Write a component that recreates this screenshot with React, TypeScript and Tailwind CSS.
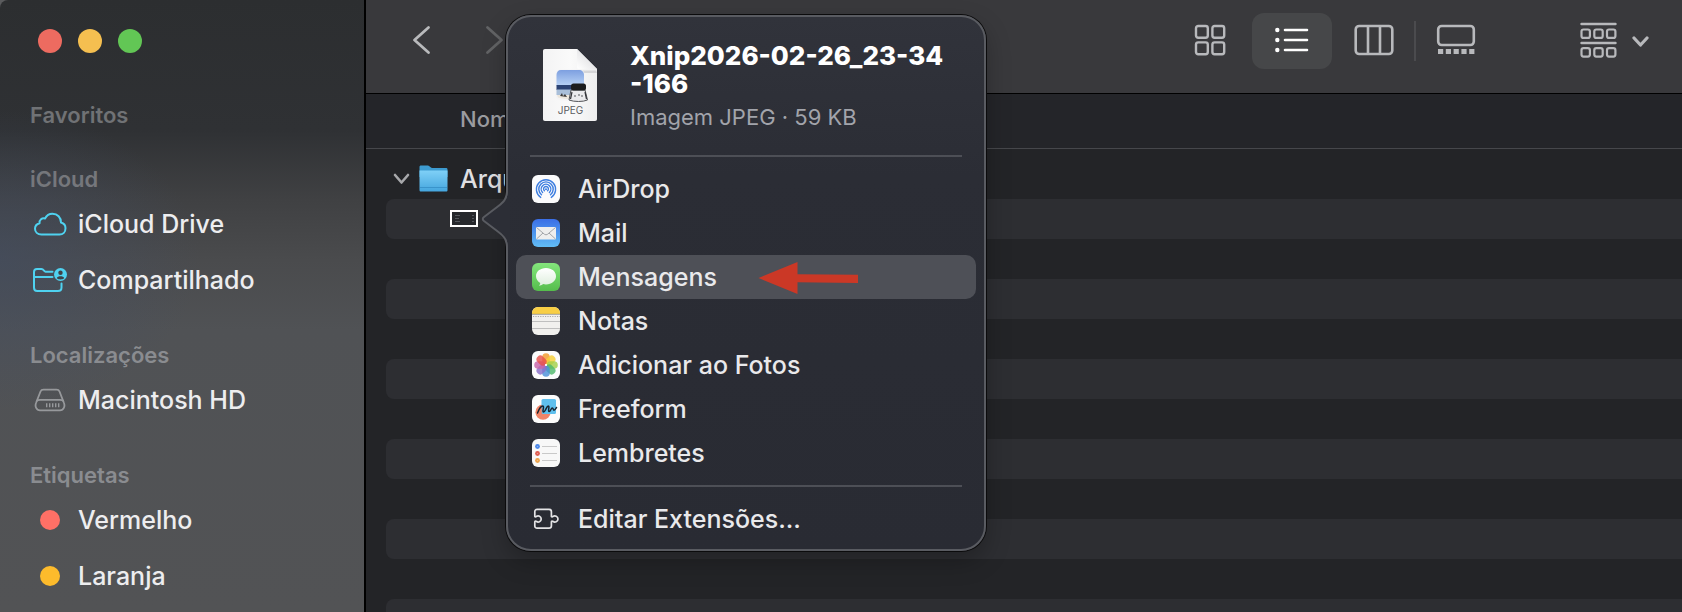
import type { ReactNode } from "react";

const petals = [
  "#f39a2b", "#f7d038", "#a3cf4a", "#4fb86b", "#4a90d9", "#8a6fc9", "#c863a8", "#e8504a",
];

function CloudIcon() {
  return (
    <svg width="34" height="24" viewBox="0 0 34 24" fill="none" stroke="#4fd2f0" strokeWidth="2" strokeLinejoin="round">
      <path d="M8.500 22.500C4.500 22.500 2 20 2 16.800C2 13.900 4 12 6.500 11.300C6.200 8 9 5.600 12 6.500C13.500 3.500 16.500 1.700 19.500 1.700C24.500 1.700 28 5.500 28 10.500C30.800 11.200 32.500 13.500 32.500 16.300C32.500 19.800 30 22.500 26.500 22.500Z" />
    </svg>
  );
}

function SharedFolderIcon() {
  return (
    <svg width="36" height="26" viewBox="0 0 36 26" fill="none" stroke="#4fd2f0" strokeWidth="2" strokeLinejoin="round" strokeLinecap="round">
      <path d="M20.500 4.800H13.500C12.300 4.800 11.500 2 9.500 2H5C2.800 2 2 3.200 2 5V20.500C2 22.800 3 24 5.200 24H26C28.300 24 29.500 22.800 29.500 20.500V16.500" />
      <path d="M2 10H20.500" />
      <circle cx="28.500" cy="7.500" r="6.500" fill="#4fd2f0" stroke="none" />
      <circle cx="28.500" cy="5.700" r="2.200" fill="#404247" stroke="none" />
      <path d="M24.800 11.200C25.400 8.600 31.600 8.600 32.200 11.200C30.500 12.800 26.500 12.800 24.800 11.200Z" fill="#404247" stroke="none" />
    </svg>
  );
}

function DriveIcon() {
  return (
    <svg width="32" height="24" viewBox="0 0 32 24" fill="none" stroke="#97999c" strokeWidth="1.800" strokeLinejoin="round">
      <path d="M6.500 3.500C7 2.200 8 1.600 9.500 1.600H22.500C24 1.600 25 2.200 25.500 3.500L29.800 14.500C31.500 18.500 29.500 22.300 26 22.300H6C2.500 22.300 0.500 18.500 2.200 14.500Z" />
      <path d="M2.500 13C4 11.800 5 11.900 6.500 11.900H25.500C27 11.900 28 11.800 29.500 13" />
      <path d="M12.700 15.200V19.200M15.700 15.200V19.200M18.700 15.200V19.200M21.700 15.200V19.200M24.700 15.200V19.200" strokeWidth="1.400" />
    </svg>
  );
}

function Tag({ color }: { color: string }) {
  return (
    <svg width="20" height="20" viewBox="0 0 20 20">
      <circle cx="10" cy="10" r="10" fill={color} />
    </svg>
  );
}

function SidebarItem({ icon, label }: { icon: ReactNode; label: string }) {
  return (
    <li>
      <a href="#" className="flex h-[56px] items-center pl-[32px] text-[25px] font-medium text-[#ededef]">
        <span className="flex w-[36px] shrink-0 justify-center">{icon}</span>
        <span className="ml-[10px] pt-[2px]">{label}</span>
      </a>
    </li>
  );
}

function SidebarGroup({ title, color, children }: { title: string; color: string; children?: ReactNode }) {
  return (
    <section className="mb-[30px]">
      <h2 className={`flex h-[34px] items-center pl-[30px] text-[22px] font-semibold ${color}`}>{title}</h2>
      {children && <ul>{children}</ul>}
    </section>
  );
}

function Sidebar() {
  return (
    <aside className="w-[366px] shrink-0 overflow-hidden rounded-tl-[8px] border-r-2 border-black bg-[radial-gradient(ellipse_200px_150px_at_0px_260px,#424d6299,transparent),linear-gradient(#2c2e30_0px,#2f3134_130px,#404143_200px,#4a4b4d_260px,#505255_330px,#525355_612px)]">
      <div className="flex h-[98px] gap-[16px] pt-[29px] pl-[38px]">
        <button aria-label="Fechar" className="size-[24px] rounded-full bg-[#ed6b60]" />
        <button aria-label="Minimizar" className="size-[24px] rounded-full bg-[#f5bf50]" />
        <button aria-label="Ampliar" className="size-[24px] rounded-full bg-[#62c655]" />
      </div>
      <nav>
        <SidebarGroup title="Favoritos" color="text-[#707275]" />
        <SidebarGroup title="iCloud" color="text-[#75777c]">
          <SidebarItem icon={<CloudIcon />} label="iCloud Drive" />
          <SidebarItem icon={<SharedFolderIcon />} label="Compartilhado" />
        </SidebarGroup>
        <SidebarGroup title="Localizações" color="text-[#8a8c90]">
          <SidebarItem icon={<DriveIcon />} label="Macintosh HD" />
        </SidebarGroup>
        <SidebarGroup title="Etiquetas" color="text-[#8a8c90]">
          <SidebarItem icon={<Tag color="#ff7066" />} label="Vermelho" />
          <SidebarItem icon={<Tag color="#fdbb2c" />} label="Laranja" />
        </SidebarGroup>
      </nav>
    </aside>
  );
}

function ViewButton({ label, active, children }: { label: string; active?: boolean; children: ReactNode }) {
  return (
    <button
      aria-label={label}
      className={`flex h-[56px] w-[80px] items-center justify-center rounded-[12px] ${active ? "bg-[#464749] text-white" : "text-[#b8b9bc]"}`}
    >
      {children}
    </button>
  );
}

function Toolbar() {
  return (
    <header className="flex h-[94px] items-start border-b border-black bg-[#39393c] pt-[13px] pr-[33px] pl-[46px]">
      <div className="flex h-[54px] items-center gap-[54px]">
        <button aria-label="Voltar">
          <svg width="19" height="30" viewBox="0 0 19 30" fill="none" stroke="#b9babc" strokeWidth="2.800" strokeLinecap="round" strokeLinejoin="round">
            <path d="M16.500 2.500L2.500 15L16.500 27.500" />
          </svg>
        </button>
        <button aria-label="Avançar">
          <svg width="19" height="30" viewBox="0 0 19 30" fill="none" stroke="#626365" strokeWidth="2.800" strokeLinecap="round" strokeLinejoin="round">
            <path d="M2.500 2.500L16.500 15L2.500 27.500" />
          </svg>
        </button>
      </div>
      <div className="ml-auto flex items-center gap-[2px]">
        <ViewButton label="Ícones">
          <svg width="32" height="32" viewBox="0 0 32 32" fill="none" stroke="currentColor" strokeWidth="2.400" className="-mt-[2px]">
            <rect x="2" y="2" width="11.800" height="11.800" rx="2.200" />
            <rect x="18.400" y="2" width="11.800" height="11.800" rx="2.200" />
            <rect x="2" y="18.400" width="11.800" height="11.800" rx="2.200" />
            <rect x="18.400" y="18.400" width="11.800" height="11.800" rx="2.200" />
          </svg>
        </ViewButton>
        <ViewButton label="Lista" active>
          <svg width="34" height="26" viewBox="0 0 34 26" fill="none" stroke="currentColor" strokeWidth="2.600" strokeLinecap="round" className="-mt-[2px]">
            <path d="M10 3H32M10 13H32M10 23H32" />
            <circle cx="2.300" cy="3" r="2.200" fill="currentColor" stroke="none" />
            <circle cx="2.300" cy="13" r="2.200" fill="currentColor" stroke="none" />
            <circle cx="2.300" cy="23" r="2.200" fill="currentColor" stroke="none" />
          </svg>
        </ViewButton>
        <ViewButton label="Colunas">
          <svg width="40" height="32" viewBox="0 0 40 32" fill="none" stroke="currentColor" strokeWidth="2.600" className="-mt-[2px]">
            <rect x="1.700" y="2" width="36.600" height="28" rx="3.500" />
            <path d="M14 2V30M26 2V30" />
          </svg>
        </ViewButton>
        <div className="-mx-[2px] h-[40px] w-[2px] bg-[#4b4b4e]" />
        <ViewButton label="Galeria">
          <svg width="40" height="32" viewBox="0 0 40 32" fill="none" stroke="currentColor" strokeWidth="2.600" className="-mt-[2px]">
            <rect x="2.200" y="2" width="35.600" height="19" rx="3.500" />
            <path d="M2 27.500H38.500" strokeWidth="5" strokeDasharray="5.200 2.600" />
          </svg>
        </ViewButton>
      </div>
      <button aria-label="Agrupar" className="ml-[84px] flex h-[54px] items-center gap-[15px] text-[#b8b9bc]">
        <svg width="37" height="36" viewBox="0 0 37 36" fill="none" stroke="currentColor" strokeWidth="2.200">
          <path d="M1.500 2H35.500M1.500 21H35.500" strokeWidth="2.400" strokeLinecap="round" />
          {[1.500, 14.300, 27].map((x) => (
            <g key={x}>
              <rect x={x} y="7.500" width="8.400" height="8.400" rx="2" />
              <rect x={x} y="26.200" width="8.400" height="8.400" rx="2" />
            </g>
          ))}
        </svg>
        <svg width="17" height="12" viewBox="0 0 17 12" fill="none" stroke="currentColor" strokeWidth="3.200" strokeLinecap="round" strokeLinejoin="round" className="mt-[3px]">
          <path d="M2 2L8.500 9L15 2" />
        </svg>
      </button>
    </header>
  );
}

function FolderIcon() {
  return (
    <svg width="29" height="27" viewBox="0 0 29 27" role="img" aria-label="Pasta">
      <defs>
        <linearGradient id="folder" x1="0" y1="0" x2="0" y2="1">
          <stop offset="0" stopColor="#7fd0f7" />
          <stop offset="1" stopColor="#45a6de" />
        </linearGradient>
      </defs>
      <path d="M0.500 2C0.500 1 1 0.500 2 0.500H9C10.500 0.500 11.500 3 13 3H27C28 3 28.500 3.500 28.500 4.500V12H0.500Z" fill="#3d9bd0" />
      <path d="M0.500 5.500H28.500V25C28.500 26 28 26.500 27 26.500H2C1 26.500 0.500 26 0.500 25Z" fill="url(#folder)" />
      <path d="M1 22.500H28" stroke="#3a94cb" strokeWidth="1" />
    </svg>
  );
}

function ThumbnailIcon() {
  return (
    <svg width="28" height="17" viewBox="0 0 28 17" role="img" aria-label="Xnip2026-02-26_23-34-166">
      <rect x="1" y="1" width="26" height="15" fill="#26282c" stroke="#ffffff" strokeWidth="2" />
      <path d="M5 5.500H10M5 8.500H9M5 11.500H10M22 5.500H24M22 8.500H24M22 11.500H24" stroke="#54575c" />
    </svg>
  );
}

function FileList() {
  return (
    <table className="w-full border-collapse bg-[#232427]">
      <thead>
        <tr className="h-[54px] border-b border-[#46474b] bg-[#242529]">
          <th className="pb-[3px] pl-[94px] text-left text-[22px] font-medium text-[#9b9ca0]">Nome</th>
        </tr>
      </thead>
      <tbody>
        <tr>
          <td className="pt-[10px] pl-[20px]">
            <div className="flex h-[40px] items-center pl-[7px]">
              <button aria-label="Recolher">
                <svg width="17" height="12" viewBox="0 0 17 12" fill="none" stroke="#a7a8ab" strokeWidth="2.600" strokeLinecap="round" strokeLinejoin="round">
                  <path d="M2 2L8.500 9.500L15 2" />
                </svg>
              </button>
              <span className="ml-[9px]"><FolderIcon /></span>
              <span className="ml-[12px] pt-[2px] text-[25px] font-medium text-[#dfdfe1]">Arquivos</span>
            </div>
          </td>
        </tr>
        <tr>
          <td className="pl-[20px]">
            <div className="flex h-[40px] items-center rounded-l-[8px] bg-[#2d2e32] pl-[64px]">
              <ThumbnailIcon />
            </div>
          </td>
        </tr>
        {Array.from({ length: 10 }, (_, i) => (
          <tr key={i}>
            <td className="pl-[20px]">
              <div className={`h-[40px] rounded-l-[8px] ${i % 2 ? "bg-[#2d2e32]" : ""}`} />
            </td>
          </tr>
        ))}
      </tbody>
    </table>
  );
}

function JpegIcon() {
  return (
    <svg width="54" height="72" viewBox="0 0 54 72" role="img" aria-label="JPEG">
      <defs>
        <linearGradient id="sky" x1="0" y1="0" x2="0" y2="1">
          <stop offset="0" stopColor="#7d9fe0" />
          <stop offset="1" stopColor="#b9d3f5" />
        </linearGradient>
        <linearGradient id="fold" x1="0" y1="1" x2="1" y2="0">
          <stop offset="0" stopColor="#ffffff" />
          <stop offset="0.600" stopColor="#e4e4e6" />
        </linearGradient>
        <linearGradient id="sheet" x1="0" y1="0" x2="1" y2="0">
          <stop offset="0" stopColor="#f3f3f4" />
          <stop offset="0.500" stopColor="#fafafa" />
          <stop offset="1" stopColor="#eeeeef" />
        </linearGradient>
      </defs>
      <path d="M2 0H34L54 20V70C54 71.300 53.300 72 52 72H2C0.700 72 0 71.300 0 70V2C0 0.700 0.700 0 2 0Z" fill="url(#sheet)" />
      <path d="M33 1V21.500H53L54 24H33Z" fill="#c9c9cc" opacity="0.700" />
      <path d="M34 0L54 20H36C34.700 20 34 19.300 34 18Z" fill="url(#fold)" />
      <rect x="12.500" y="20.500" width="29" height="31" rx="5" fill="#f4f4f5" />
      <path d="M13.500 26C13.500 23 15 21 18 21H36C39 21 41 23 41 26V37H13.500Z" fill="url(#sky)" />
      <path d="M13.500 36H41V41H13.500Z" fill="#2c4373" />
      <path d="M13.500 40.500H41V46H13.500Z" fill="#a9bfd9" />
      <path d="M14 46H36V48C30 50.500 20 50.500 15 48.500Z" fill="#ece6dc" />
      <path d="M17 47L19 44L20 47L22 45L24 48Z" fill="#3b3a3a" />
      <path d="M28 41H42L44.500 51C40 53 31 53 26 51Z" fill="#eaeaec" stroke="#55565a" strokeWidth="1" />
      <rect x="28" y="34.500" width="15" height="7" rx="2.500" fill="#1b1c1e" />
      <path d="M31 47H33M35 46H37M38 47H40" stroke="#55565a" strokeWidth="1.200" />
      <path d="M42 43L43.500 50M29 43L27.500 50" stroke="#333438" strokeWidth="1.200" />
      <text x="27.500" y="65" textAnchor="middle" fontFamily="Inter, sans-serif" fontSize="10" fill="#5b5c5f">JPEG</text>
    </svg>
  );
}

function AppTile({ children }: { children: ReactNode }) {
  return (
    <svg width="28" height="28" viewBox="0 0 28 28" className="overflow-hidden rounded-[6px]">
      {children}
    </svg>
  );
}

function AirDropIcon() {
  return (
    <AppTile>
      <rect width="28" height="28" fill="#fbfbfc" />
      <g fill="none" stroke="#3f7fe0" strokeWidth="1.400" strokeLinecap="round">
        <path d="M8.700 22.400A9.600 9.600 0 1 1 19.300 22.400" />
        <path d="M9.500 19.700A7.200 7.200 0 1 1 18.500 19.700" />
        <path d="M10.600 17.500A4.800 4.800 0 1 1 17.400 17.500" />
        <path d="M12.400 15.700A2.400 2.400 0 1 1 15.600 15.700" />
      </g>
      <circle cx="14" cy="14.200" r="1" fill="#3f7fe0" />
    </AppTile>
  );
}

function MailIcon() {
  return (
    <AppTile>
      <linearGradient id="mail" x1="0" y1="0" x2="0" y2="1">
        <stop offset="0" stopColor="#3a6ee6" />
        <stop offset="1" stopColor="#62bdf6" />
      </linearGradient>
      <rect width="28" height="28" fill="url(#mail)" />
      <rect x="4" y="8" width="20" height="12.500" rx="1" fill="#eeeeee" />
      <path d="M4.500 8.500L12.500 15.300Q14 16.400 15.500 15.300L23.500 8.500M4.500 20L11 14M23.500 20L17 14" fill="none" stroke="#9a9da1" strokeWidth="0.900" />
    </AppTile>
  );
}

function MessagesIcon() {
  return (
    <AppTile>
      <linearGradient id="messages" x1="0" y1="0" x2="0" y2="1">
        <stop offset="0" stopColor="#84e67c" />
        <stop offset="1" stopColor="#55bd4c" />
      </linearGradient>
      <linearGradient id="bubble" x1="0" y1="0" x2="0" y2="1">
        <stop offset="0" stopColor="#ffffff" />
        <stop offset="1" stopColor="#deeedd" />
      </linearGradient>
      <rect width="28" height="28" fill="url(#messages)" />
      <path d="M14 5C19.800 5 24 8.600 24 13.200C24 17.800 19.800 21.400 14 21.400C13 21.400 12 21.300 11.100 21.100C9.900 22.100 8.300 22.700 6.800 22.800C7.700 21.900 8.200 20.900 8.300 19.900C5.700 18.400 4 16 4 13.200C4 8.600 8.200 5 14 5Z" fill="url(#bubble)" />
    </AppTile>
  );
}

function NotesIcon() {
  return (
    <AppTile>
      <rect width="28" height="28" fill="#f1f0ee" />
      <rect width="28" height="7" fill="#f8ce45" />
      <path d="M0 7.300H28" stroke="#8f8b80" strokeWidth="0.800" />
      <path d="M1 9.500H28" stroke="#a9a9a9" strokeWidth="1" strokeDasharray="1.200 1.200" />
      <path d="M0 14.500H28M0 21.500H28" stroke="#b9b9b9" strokeWidth="0.900" />
    </AppTile>
  );
}

function PhotosIcon() {
  return (
    <AppTile>
      <rect width="28" height="28" fill="#fcfcfc" />
      {petals.map((color, i) => (
        <rect key={color} x="10.200" y="2.200" width="7.600" height="11" rx="3.800" fill={color} opacity="0.820" transform={`rotate(${i * 45} 14 14)`} />
      ))}
      <circle cx="14" cy="14" r="1.100" fill="#ffffff" />
    </AppTile>
  );
}

function FreeformIcon() {
  return (
    <AppTile>
      <rect width="28" height="28" fill="#fcfcfc" />
      <circle cx="11" cy="17.200" r="7.600" fill="#f08468" />
      <rect x="9.500" y="4" width="14.500" height="15" rx="1.500" fill="#5fc0ee" />
      <path d="M9.500 19V10.500C5.500 12 4 15 4 17.500Q7 19 9.500 19Z" fill="#f08468" />
      <path d="M5.500 18C7 14 9 11 10.800 11C12.800 11 9.800 16.800 11.500 17C13.200 17.200 14.500 11 16.300 11C18 11 15.500 16.500 17.300 16.500C18.600 16.500 19 13 20.300 13C21.500 13 21 15.200 22 15.200C22.900 15.200 23.600 14 24.500 12.500" fill="none" stroke="#18242f" strokeWidth="1.500" strokeLinecap="round" />
    </AppTile>
  );
}

function RemindersIcon() {
  return (
    <AppTile>
      <rect width="28" height="28" fill="#f8f8f8" />
      {[["#4a86e8", 7.500], ["#dd5b50", 14.500], ["#eba24a", 21.500]].map(([color, y]) => (
        <g key={color}>
          <circle cx="5.500" cy={y} r="2.400" fill={color as string} />
          <circle cx="5.500" cy={y} r="0.800" fill="#ffffff" fillOpacity="0.350" />
          <path d={`M10 ${y}H25`} stroke="#c3c3c3" strokeWidth="0.900" />
        </g>
      ))}
    </AppTile>
  );
}

function ExtensionIcon() {
  return (
    <svg width="28" height="22" viewBox="0 0 28 22" fill="none" stroke="#e4e4e6" strokeWidth="1.700" strokeLinejoin="round" strokeLinecap="round">
      <path d="M2.800 8.200V3.800C2.800 2.200 3.600 1.400 5.200 1.400H17C18.600 1.400 19.400 2.200 19.400 3.800V8.200C19.400 9.200 20.400 9 21.200 8.300C22.800 7.200 26 8.200 26 10.900C26 13.600 22.800 14.700 21.200 13.500C20.400 12.900 19.400 12.700 19.400 13.700V17.700C19.400 19.300 18.600 20.100 17 20.100H5.200C3.600 20.100 2.800 19.300 2.800 17.700V13.700C2.800 12.700 3.800 12.900 4.600 13.500C6.200 14.700 9.200 13.600 9.200 10.900C9.200 8.200 6.200 7.200 4.600 8.300C3.800 9 2.800 9.200 2.800 8.200Z" />
    </svg>
  );
}

function MenuItem({ icon, label, active, children }: { icon: ReactNode; label: string; active?: boolean; children?: ReactNode }) {
  return (
    <button
      role="menuitem"
      className={`flex h-[44px] w-full items-center rounded-[10px] pl-[16px] text-left text-[25px] font-medium text-[#e9e9eb] ${active ? "bg-[#4e5057]" : ""}`}
    >
      {icon}
      <span className="ml-[18px] pt-[2px]">{label}</span>
      {children}
    </button>
  );
}

function Arrow() {
  return (
    <svg width="100" height="34" viewBox="0 0 100 34" className="ml-[41px] mt-[2px]">
      <path d="M0.500 17L39.500 1V13.200L100 13.800V22L39.500 21.200V33Z" fill="#cb3826" />
    </svg>
  );
}

function SharePopover() {
  return (
    <div className="absolute top-[15px] left-[140px] w-[480px] rounded-[25px] border-2 border-[#595b61] bg-linear-to-b from-[#31333b] via-[#2b2d35] via-30% to-[#292b33] px-[8px] pb-[8px] shadow-[0_0_0_1px_#0b0b0c,0_10px_24px_#00000040]">
      <svg width="29" height="62" viewBox="0 0 29 62" className="absolute top-[171px] -left-[27px]">
        <path d="M29 0H27C27 11 24 14 17 19.500L4 29Q1.500 31 4 33L17 42.500C24 48 27 51 27 62H29Z" fill="#2c2e36" />
        <path d="M26 0C26 11 23.500 13.500 16.500 18.800L3 29Q0.500 31 3 33L16.500 43.200C23.500 48.500 26 51 26 62" fill="none" stroke="#595b61" strokeWidth="2" />
      </svg>
      <div className="flex h-[138px] items-start pt-[32px] pl-[27px]">
        <JpegIcon />
        <div className="ml-[33px] -mt-[7px]">
          <h1 className="text-[26px] leading-[28px] font-extrabold text-white">
            Xnip2026-02-26_23-34
            <br />
            -166
          </h1>
          <p className="mt-[5px] text-[22px] leading-[28px] text-[#a2a4ab]">Imagem JPEG · 59 KB</p>
        </div>
      </div>
      <hr className="mx-[14px] mb-[10px] h-[2px] border-0 bg-[#4d4f56]" />
      <div role="menu">
        <MenuItem icon={<AirDropIcon />} label="AirDrop" />
        <MenuItem icon={<MailIcon />} label="Mail" />
        <MenuItem icon={<MessagesIcon />} label="Mensagens" active>
          <Arrow />
        </MenuItem>
        <MenuItem icon={<NotesIcon />} label="Notas" />
        <MenuItem icon={<PhotosIcon />} label="Adicionar ao Fotos" />
        <MenuItem icon={<FreeformIcon />} label="Freeform" />
        <MenuItem icon={<RemindersIcon />} label="Lembretes" />
        <hr className="mx-[14px] my-[10px] h-[2px] border-0 bg-[#4d4f56]" />
        <MenuItem icon={<ExtensionIcon />} label="Editar Extensões..." />
      </div>
    </div>
  );
}

export default function App() {
  return (
    <div className="flex h-screen overflow-hidden bg-[#5a5b5d] font-['Inter',sans-serif]">
      <Sidebar />
      <main className="relative min-w-0 flex-1 bg-[#232427]">
        <Toolbar />
        <FileList />
        <SharePopover />
      </main>
    </div>
  );
}
